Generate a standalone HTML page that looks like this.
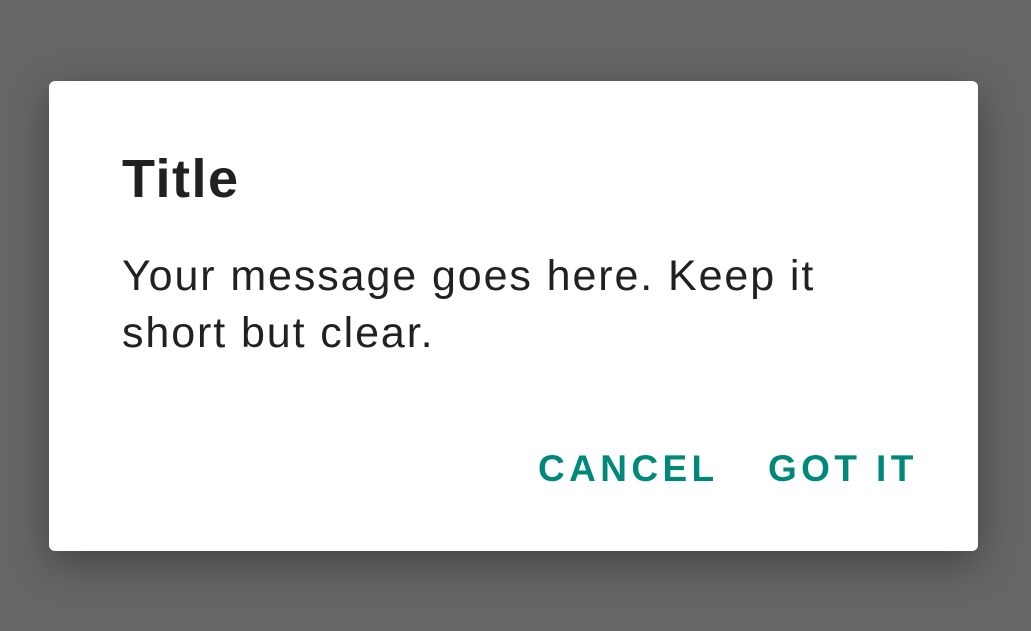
<!DOCTYPE html>
<html><head><style>
html,body{margin:0;padding:0;width:1031px;height:631px;background:#666;overflow:hidden;font-family:"Liberation Sans",sans-serif;}
.d{position:absolute;left:49px;top:81px;width:929px;height:470px;background:#fff;border-radius:6px;box-shadow:0 12px 40px rgba(0,0,0,0.35);}
.t{position:absolute;left:73px;top:67px;font-size:54px;font-weight:bold;color:#212121;letter-spacing:1.5px;}
.m{position:absolute;left:73px;top:167px;font-size:43px;line-height:57px;color:#212121;letter-spacing:1.9px;white-space:nowrap;}
.b{position:absolute;top:367px;font-size:37px;font-weight:bold;color:#00897b;letter-spacing:4.4px;}
</style></head><body>
<div class="d">
<div class="t">Title</div>
<div class="m">Your message goes here. Keep it<br>short but clear.</div>
<div class="b" style="left:489px">CANCEL</div>
<div class="b" style="left:719px">GOT IT</div>
</div>
</body></html>
